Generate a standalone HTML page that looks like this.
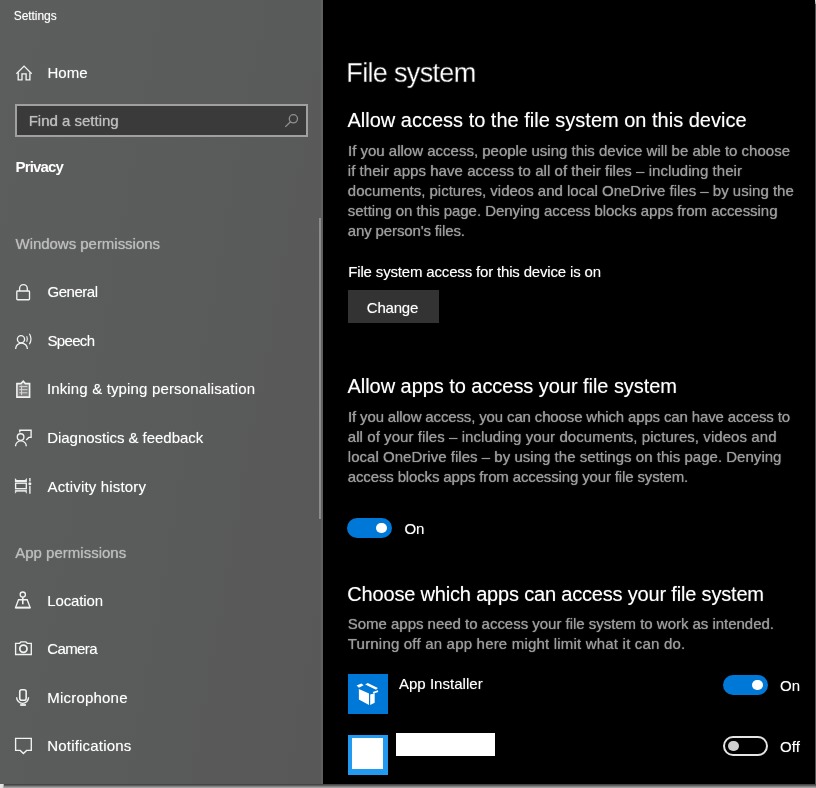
<!DOCTYPE html>
<html lang="en">
<head>
<meta charset="utf-8">
<title>Settings</title>
<style>
html,body{margin:0;padding:0;}
body{width:816px;height:788px;overflow:hidden;background:#000;font-family:"Liberation Sans",sans-serif;color:#fff;position:relative;}
#win{position:absolute;left:0;top:0;width:816px;height:788px;overflow:hidden;background:#000;}
#side{position:absolute;left:0;top:0;width:323.3px;height:783.8px;background:linear-gradient(100deg,#5c5d5d 0%,#5a5b5b 45%,#585858 100%);}
#strip{position:absolute;left:321px;top:0;width:2.3px;height:783.8px;background:rgba(255,255,255,0.045);}
#edgeR{position:absolute;left:814.6px;top:0;width:1.4px;height:788px;background:#555;}
#edgeB{position:absolute;left:0;top:783.8px;width:816px;height:4.2px;background:linear-gradient(180deg,#404040 0%,#484848 22%,#6e6e6e 48%,#949494 75%,#adadad 100%);}
#cornerBL{position:absolute;left:0;top:783.8px;width:3.6px;height:4.2px;background:linear-gradient(90deg,#e6e6e6 0%,#e0e0e0 70%,#909090 100%);}
#cornerTR{position:absolute;left:814.6px;top:0;width:1.4px;height:4px;background:linear-gradient(180deg,#e4e4e4,#999);}
.t{position:absolute;margin:0;padding:0;font-weight:normal;white-space:nowrap;line-height:20px;height:20px;filter:blur(0.5px);}
#icons{position:absolute;left:0;top:0;filter:blur(0.5px);}
#search{position:absolute;left:15.3px;top:104.4px;width:292.6px;height:32.6px;box-sizing:border-box;border:2.6px solid #a0a0a0;background:#3a3a3a;}
#scroll{position:absolute;left:319px;top:217.5px;width:2.4px;height:301.5px;background:#8c8c8c;}
#btn{position:absolute;left:347.7px;top:289.5px;width:91.2px;height:33.1px;background:#333;}
.tog{position:absolute;width:45px;height:20px;border-radius:10px;box-sizing:border-box;}
.tog.on{background:#0078d7;}
.tog.on i{position:absolute;left:29.3px;top:4.6px;width:10.8px;height:10.8px;border-radius:50%;background:#fff;}
.tog.off{border:2px solid #e4e4e4;background:#000;}
.tog.off i{position:absolute;left:3.2px;top:3px;width:10.2px;height:10.2px;border-radius:50%;background:#cfcfcf;}
</style>
</head>
<body>
<div id="win">
  <div id="side"></div>
  <div id="strip"></div>
  <div id="search"></div>
  <div id="scroll"></div>
  <div id="btn"></div>

  <div class="tog on" style="left:347px;top:518px;"><i></i></div>
  <div class="tog on" style="left:723.2px;top:675px;"><i></i></div>
  <div class="tog off" style="left:723.2px;top:735.5px;"><i></i></div>

  <div style="position:absolute;left:347.8px;top:674.1px;width:40.3px;height:40px;background:#0078d7;"></div>
  <div style="position:absolute;left:347.8px;top:734.8px;width:40.3px;height:40.2px;background:#219af0;"></div>
  <div style="position:absolute;left:352.3px;top:738px;width:31px;height:30.8px;background:#fff;"></div>
  <div style="position:absolute;left:396px;top:732.9px;width:98.8px;height:23px;background:#fff;"></div>

  <svg id="icons" width="816" height="788" viewBox="0 0 816 788" fill="none" stroke="#f2f2f2" stroke-width="1.35" stroke-linejoin="miter" stroke-linecap="butt">
    <!-- home -->
    <path d="M16.4 73.7 L24.05 66.1 L31.7 73.7"/>
    <path d="M18.2 72.4 V79.8 H22 V73.8 H26.1 V79.8 H29.9 V72.4"/>
    <!-- search -->
    <g stroke="#909090" stroke-width="1.3"><circle cx="293.4" cy="118.8" r="4.1"/><path d="M290.5 121.7 L285.3 126.9"/></g>
    <!-- lock -->
    <rect x="16.8" y="291" width="12.7" height="8.7" rx="0.8"/>
    <path d="M19.6 291 V288.5 a3.85 3.85 0 0 1 7.7 0 V291"/>
    <!-- speech -->
    <circle cx="21" cy="339.2" r="3.6"/>
    <path d="M15.6 349 a5.9 5.9 0 0 1 11.8 0"/>
    <path d="M26.7 336.3 A6.3 6.3 0 0 1 26.7 341.7" stroke-width="1.1"/>
    <path d="M29.4 333.8 A10 10 0 0 1 29.4 344.2" stroke-width="1.2"/>
    <!-- inking clipboard -->
    <path d="M16.9 383.6 H21 L23.2 381.2 L25.4 383.6 H29.6 V397.1 H16.9 Z" stroke-width="1.6" fill="rgba(255,255,255,0.22)"/>
    <path d="M19.3 386.6 H27.4 M19.3 389.7 H27.4 M19.3 392.8 H27.4 M21.6 385.5 V395" stroke-width="1" stroke="#d8d8d8"/>
    <!-- diagnostics -->
    <circle cx="20.6" cy="437" r="3.3"/>
    <path d="M15.5 446.2 a5.4 5.4 0 0 1 10.8 0"/>
    <path d="M19.8 432.6 V430.2 H31.1 V437.4 H28.8 L26.2 440" />
    <!-- activity history -->
    <rect x="15.6" y="483.2" width="10.7" height="5.5"/>
    <path d="M14.9 477.9 L16.8 479.9 H25 L26.9 477.9 V482.1 H14.9 Z" fill="#efefef" stroke="none"/><path d="M14.9 493.8 L16.8 491.7 H25 L26.9 493.8 V489.9 H14.9 Z" fill="#dcdcdc" stroke="none"/>
    <path d="M29.9 478 V481.6 M29.9 486 V493.8"/>
    <circle cx="29.9" cy="483.8" r="1.5" fill="#f2f2f2" stroke="none"/>
    <!-- location -->
    <path d="M18.5 599.7 H27.2 L30.1 607.6 H15.6 Z"/><path d="M15.4 607.6 H30.3" stroke-width="1.9"/>
    <circle cx="22.8" cy="594.6" r="2.6"/>
    <path d="M22.8 597.2 V604.3" stroke-width="1.6"/>
    <!-- camera -->
    <path d="M15.6 643.3 H19.6 L21 641.9 H25.9 L27.3 643.3 H31.3 V654.5 H15.6 Z"/>
    <circle cx="23.4" cy="648.8" r="3.6" stroke-width="1.8"/>
    <!-- microphone -->
    <rect x="19.75" y="689.8" width="6.4" height="10.4" rx="2" stroke-width="1.6"/>
    <path d="M16.6 697.3 a6 6 0 0 0 12 0"/>
    <path d="M20.2 705 H25.9" stroke-width="1.8"/>
    <!-- notifications -->
    <path d="M15.6 738.4 H31.3 V750.4 H26.6 L23.4 753.6 L20.2 750.4 H15.6 Z"/>
    <!-- app installer glyph -->
    <g fill="#fff" stroke="none">
      <path d="M358.9 689 L369 693.5 V704.9 L358.9 699.5 Z"/>
      <path d="M370.2 694.4 L374.7 693.2 V702.7 L370.2 704.9 Z"/>
      <path d="M356.6 685.5 L361.4 683.6 L363.6 685.2 L358.9 687.8 Z"/>
      <path d="M365.2 684.6 L367.7 683 L377.9 688.1 L376 689.7 Z"/>
      <path d="M372.8 691.9 L377.9 690.3 L378.2 691.9 L373.5 693.5 Z"/>
    </g>
  </svg>

  <nav id="navtext">
    <div class="t" style="left:13.7px;top:6.44px;font-size:12px;letter-spacing:-0.051px;color:#fff;text-shadow:0 0 1px rgba(255,255,255,0.5)">Settings</div>
    <div class="t" style="left:47.4px;top:63.00px;font-size:15px;letter-spacing:0.061px;color:#fff;text-shadow:0 0 1px rgba(255,255,255,0.5)">Home</div>
    <div class="t" style="left:28.7px;top:111.00px;font-size:15px;letter-spacing:-0.005px;color:#bdbdbd;text-shadow:0 0 1px currentColor">Find a setting</div>
    <div class="t" style="left:15.5px;top:156.80px;font-size:15px;letter-spacing:-0.857px;color:#fff;font-weight:bold;text-shadow:none">Privacy</div>
    <div class="t" style="left:15.5px;top:234.30px;font-size:15px;letter-spacing:-0.030px;color:#bcbcbc;text-shadow:0 0 1px currentColor">Windows permissions</div>
    <div class="t" style="left:47.5px;top:281.80px;font-size:15px;letter-spacing:-0.479px;color:#fff;text-shadow:0 0 1px rgba(255,255,255,0.5)">General</div>
    <div class="t" style="left:47.5px;top:330.50px;font-size:15px;letter-spacing:-0.675px;color:#fff;text-shadow:0 0 1px rgba(255,255,255,0.5)">Speech</div>
    <div class="t" style="left:46.9px;top:379.20px;font-size:15px;letter-spacing:0.154px;color:#fff;text-shadow:0 0 1px rgba(255,255,255,0.5)">Inking &amp; typing personalisation</div>
    <div class="t" style="left:47.2px;top:427.80px;font-size:15px;letter-spacing:-0.032px;color:#fff;text-shadow:0 0 1px rgba(255,255,255,0.5)">Diagnostics &amp; feedback</div>
    <div class="t" style="left:47.5px;top:476.50px;font-size:15px;letter-spacing:0.176px;color:#fff;text-shadow:0 0 1px rgba(255,255,255,0.5)">Activity history</div>
    <div class="t" style="left:15.2px;top:542.80px;font-size:15px;letter-spacing:0.011px;color:#bcbcbc;text-shadow:0 0 1px currentColor">App permissions</div>
    <div class="t" style="left:47.3px;top:590.80px;font-size:15px;letter-spacing:-0.146px;color:#fff;text-shadow:0 0 1px rgba(255,255,255,0.5)">Location</div>
    <div class="t" style="left:47.3px;top:639.30px;font-size:15px;letter-spacing:-0.632px;color:#fff;text-shadow:0 0 1px rgba(255,255,255,0.5)">Camera</div>
    <div class="t" style="left:47.3px;top:687.80px;font-size:15px;letter-spacing:0.201px;color:#fff;text-shadow:0 0 1px rgba(255,255,255,0.5)">Microphone</div>
    <div class="t" style="left:47.3px;top:736.10px;font-size:15px;letter-spacing:0.187px;color:#fff;text-shadow:0 0 1px rgba(255,255,255,0.5)">Notifications</div>
  </nav>
  <main id="maintext">
    <h1 class="t" style="left:346.3px;top:63.44px;font-size:27px;letter-spacing:-0.663px;color:#fff;-webkit-text-stroke:0.35px #000;text-shadow:0 0 1px rgba(255,255,255,0.6)">File system</h1>
    <h2 class="t" style="left:347.5px;top:110.47px;font-size:20px;letter-spacing:-0.001px;color:#fff;text-shadow:0 0 1px rgba(255,255,255,0.5)">Allow access to the file system on this device</h2>
    <p class="t" style="left:348.0px;top:140.80px;font-size:15px;letter-spacing:0.001px;color:#9b9b9b;text-shadow:0 0 1px currentColor">If you allow access, people using this device will be able to choose</p>
    <p class="t" style="left:347.8px;top:160.80px;font-size:15px;letter-spacing:0.049px;color:#9b9b9b;text-shadow:0 0 1px currentColor">if their apps have access to all of their files – including their</p>
    <p class="t" style="left:347.8px;top:181.00px;font-size:15px;letter-spacing:-0.002px;color:#9b9b9b;text-shadow:0 0 1px currentColor">documents, pictures, videos and local OneDrive files – by using the</p>
    <p class="t" style="left:347.8px;top:201.10px;font-size:15px;letter-spacing:-0.049px;color:#9b9b9b;text-shadow:0 0 1px currentColor">setting on this page. Denying access blocks apps from accessing</p>
    <p class="t" style="left:347.8px;top:220.80px;font-size:15px;letter-spacing:-0.133px;color:#9b9b9b;text-shadow:0 0 1px currentColor">any person's files.</p>
    <div class="t" style="left:348.3px;top:262.00px;font-size:15px;letter-spacing:-0.168px;color:#fff;text-shadow:0 0 1px rgba(255,255,255,0.5)">File system access for this device is on</div>
    <div class="t" style="left:366.8px;top:297.60px;font-size:15px;letter-spacing:-0.209px;color:#fff;text-shadow:0 0 1px rgba(255,255,255,0.5)">Change</div>
    <h2 class="t" style="left:347.5px;top:376.47px;font-size:20px;letter-spacing:-0.049px;color:#fff;text-shadow:0 0 1px rgba(255,255,255,0.5)">Allow apps to access your file system</h2>
    <p class="t" style="left:348.0px;top:406.80px;font-size:15px;letter-spacing:-0.142px;color:#9b9b9b;text-shadow:0 0 1px currentColor">If you allow access, you can choose which apps can have access to</p>
    <p class="t" style="left:347.8px;top:426.80px;font-size:15px;letter-spacing:0.066px;color:#9b9b9b;text-shadow:0 0 1px currentColor">all of your files – including your documents, pictures, videos and</p>
    <p class="t" style="left:347.8px;top:447.20px;font-size:15px;letter-spacing:0.027px;color:#9b9b9b;text-shadow:0 0 1px currentColor">local OneDrive files – by using the settings on this page. Denying</p>
    <p class="t" style="left:347.8px;top:467.30px;font-size:15px;letter-spacing:-0.144px;color:#9b9b9b;text-shadow:0 0 1px currentColor">access blocks apps from accessing your file system.</p>
    <div class="t" style="left:404.5px;top:518.50px;font-size:15px;letter-spacing:-0.266px;color:#fff;text-shadow:0 0 1px rgba(255,255,255,0.5)">On</div>
    <h2 class="t" style="left:347.3px;top:584.27px;font-size:20px;letter-spacing:-0.180px;color:#fff;text-shadow:0 0 1px rgba(255,255,255,0.5)">Choose which apps can access your file system</h2>
    <p class="t" style="left:347.8px;top:614.30px;font-size:15px;letter-spacing:-0.025px;color:#9b9b9b;text-shadow:0 0 1px currentColor">Some apps need to access your file system to work as intended.</p>
    <p class="t" style="left:347.8px;top:634.30px;font-size:15px;letter-spacing:0.195px;color:#9b9b9b;text-shadow:0 0 1px currentColor">Turning off an app here might limit what it can do.</p>
    <div class="t" style="left:398.9px;top:673.50px;font-size:15px;letter-spacing:0.034px;color:#fff;text-shadow:0 0 1px rgba(255,255,255,0.5)">App Installer</div>
    <div class="t" style="left:780.0px;top:675.50px;font-size:15px;letter-spacing:-0.016px;color:#fff;text-shadow:0 0 1px rgba(255,255,255,0.5)">On</div>
    <div class="t" style="left:780.0px;top:737.00px;font-size:15px;letter-spacing:0.133px;color:#fff;text-shadow:0 0 1px rgba(255,255,255,0.5)">Off</div>
  </main>

  <div id="edgeR"></div>
  <div id="edgeB"></div>
  <div id="cornerBL"></div>
  <div id="cornerTR"></div>
</div>
</body>
</html>
